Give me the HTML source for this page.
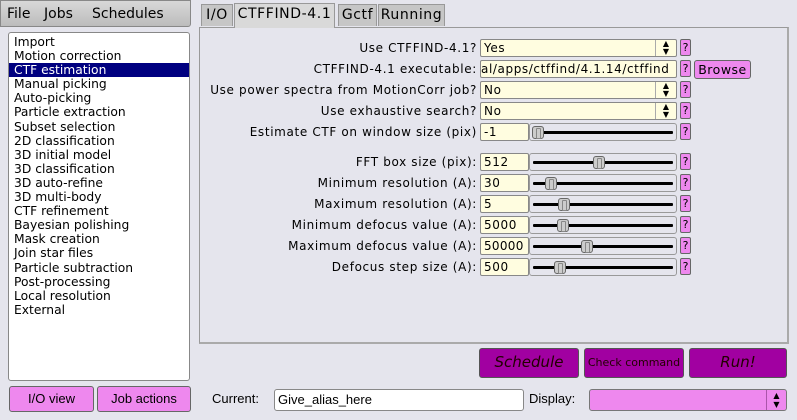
<!DOCTYPE html>
<html><head><meta charset="utf-8"><style>
*{box-sizing:border-box;margin:0;padding:0}
body{width:797px;height:420px;background:#e5e5ed;font-family:"DejaVu Sans","Liberation Sans",sans-serif;font-size:12px;color:#000;position:relative;overflow:hidden}
.a{position:absolute}
.menu{left:0;top:0;width:191px;height:27px;background:linear-gradient(#d8d8d8,#bcbcbc);border:1px solid #888;border-radius:0 0 3px 0;font-size:14px;line-height:26px}
.menu span{position:absolute;top:0}
.list{left:8px;top:32px;width:182px;height:349px;background:#fff;border:1px solid #888;border-radius:3px;padding-top:2px}
.list div{height:14.1px;line-height:14px;padding-left:5px;font-size:12.3px;white-space:nowrap}
.list .sel{background:#000080;color:#fff}
.tab{top:4px;height:22px;background:#c6c6c6;border:1px solid #999;border-bottom:none;font-size:14px;letter-spacing:0.6px;line-height:21px;text-align:center;white-space:nowrap}
.tab.on{background:#d9d9d9;top:3px;height:25px}
.panel{left:199px;top:27px;width:590px;height:317px;border:1px solid #999;border-right:2px solid #aaa;border-bottom:2px solid #aaa;background:#e5e5ed}
.lbl{width:278px;left:199px;text-align:right;height:18px;line-height:18px;letter-spacing:0.65px;white-space:nowrap}
.inp{height:18px;background:#fffde0;border:1px solid #888;border-radius:2px;line-height:16px;padding-left:3px;white-space:nowrap;overflow:hidden;letter-spacing:0.6px}
.dd .ar{position:absolute;right:0;top:0;width:21px;height:16px;border-left:1px solid #aaa;font-size:8px;line-height:8px;text-align:center;letter-spacing:0}
.sl{height:18px;border:1px solid #999;border-radius:3px;background:#e5e5ed}
.sl .ln{position:absolute;left:3px;right:3px;top:7px;height:3px;background:#000;border-radius:1px}
.sl .k{position:absolute;top:2px;width:12px;height:13px;background:#ccc;border:1px solid #666;border-radius:3px}
.sl .k:after{content:"";position:absolute;left:3px;top:1px;width:3px;height:9px;border:1px solid #888;border-radius:1px}
.h{left:680px;width:11px;height:17px;background:#ee88ee;border:1px solid #666;border-radius:2px;font-size:11px;line-height:15px;text-align:center}
.pb{background:#a100a1;border:1px solid #555;border-radius:3px;text-align:center;font-style:italic;font-size:15px;line-height:27px;color:#200}
.vb{background:#ee88ee;border:1px solid #666;border-radius:3px;text-align:center;font-size:13px;line-height:24px;font-family:"Liberation Sans",sans-serif}
</style></head><body>
<div class="a menu"><span style="left:6px">File</span><span style="left:43px">Jobs</span><span style="left:91px">Schedules</span></div>
<div class="a list">
<div>Import</div><div>Motion correction</div><div class="sel">CTF estimation</div><div>Manual picking</div><div>Auto-picking</div><div>Particle extraction</div><div>Subset selection</div><div>2D classification</div><div>3D initial model</div><div>3D classification</div><div>3D auto-refine</div><div>3D multi-body</div><div>CTF refinement</div><div>Bayesian polishing</div><div>Mask creation</div><div>Join star files</div><div>Particle subtraction</div><div>Post-processing</div><div>Local resolution</div><div>External</div>
</div>
<div class="a vb" style="left:9px;top:386px;width:85px;height:26px">I/O view</div>
<div class="a vb" style="left:97px;top:386px;width:94px;height:26px">Job actions</div>

<div class="a panel"></div>
<div class="a tab" style="left:201px;width:32px">I/O</div>
<div class="a tab on" style="left:234px;width:101px">CTFFIND-4.1</div>
<div class="a tab" style="left:338px;width:39px">Gctf</div>
<div class="a tab" style="left:378px;width:67px">Running</div>

<div class="a lbl" style="top:39px">Use CTFFIND-4.1?</div>
<div class="a inp dd" style="left:480px;top:39px;width:197px">Yes<div class="ar">▲<br>▼</div></div>
<div class="a h" style="top:39px">?</div>

<div class="a lbl" style="top:60px">CTFFIND-4.1 executable:</div>
<div class="a inp" style="left:480px;top:60px;width:197px;padding-left:0">al/apps/ctffind/4.1.14/ctffind</div>
<div class="a h" style="top:60px">?</div>
<div class="a vb" style="left:694px;top:60px;width:57px;height:19px;line-height:17px;font-size:12.5px;font-family:'DejaVu Sans',sans-serif;letter-spacing:0.5px">Browse</div>

<div class="a lbl" style="top:81px">Use power spectra from MotionCorr job?</div>
<div class="a inp dd" style="left:480px;top:81px;width:197px">No<div class="ar">▲<br>▼</div></div>
<div class="a h" style="top:81px">?</div>

<div class="a lbl" style="top:102px">Use exhaustive search?</div>
<div class="a inp dd" style="left:480px;top:102px;width:197px">No<div class="ar">▲<br>▼</div></div>
<div class="a h" style="top:102px">?</div>

<div class="a lbl" style="top:123px">Estimate CTF on window size (pix)</div>
<div class="a inp" style="left:480px;top:123px;width:49px">-1</div>
<div class="a sl" style="left:529px;top:123px;width:148px"><div class="ln"></div><div class="k" style="left:2px"></div></div>
<div class="a h" style="top:123px">?</div>

<div class="a lbl" style="top:153px">FFT box size (pix):</div>
<div class="a inp" style="left:480px;top:153px;width:49px">512</div>
<div class="a sl" style="left:529px;top:153px;width:148px"><div class="ln"></div><div class="k" style="left:63px"></div></div>
<div class="a h" style="top:153px">?</div>

<div class="a lbl" style="top:174px">Minimum resolution (A):</div>
<div class="a inp" style="left:480px;top:174px;width:49px">30</div>
<div class="a sl" style="left:529px;top:174px;width:148px"><div class="ln"></div><div class="k" style="left:15px"></div></div>
<div class="a h" style="top:174px">?</div>

<div class="a lbl" style="top:195px">Maximum resolution (A):</div>
<div class="a inp" style="left:480px;top:195px;width:49px">5</div>
<div class="a sl" style="left:529px;top:195px;width:148px"><div class="ln"></div><div class="k" style="left:28px"></div></div>
<div class="a h" style="top:195px">?</div>

<div class="a lbl" style="top:216px">Minimum defocus value (A):</div>
<div class="a inp" style="left:480px;top:216px;width:49px">5000</div>
<div class="a sl" style="left:529px;top:216px;width:148px"><div class="ln"></div><div class="k" style="left:27px"></div></div>
<div class="a h" style="top:216px">?</div>

<div class="a lbl" style="top:237px">Maximum defocus value (A):</div>
<div class="a inp" style="left:480px;top:237px;width:49px;letter-spacing:0.3px">50000</div>
<div class="a sl" style="left:529px;top:237px;width:148px"><div class="ln"></div><div class="k" style="left:51px"></div></div>
<div class="a h" style="top:237px">?</div>

<div class="a lbl" style="top:258px">Defocus step size (A):</div>
<div class="a inp" style="left:480px;top:258px;width:49px">500</div>
<div class="a sl" style="left:529px;top:258px;width:148px"><div class="ln"></div><div class="k" style="left:24px"></div></div>
<div class="a h" style="top:258px">?</div>

<div class="a pb" style="left:479px;top:348px;width:100px;height:30px">Schedule</div>
<div class="a pb" style="left:584px;top:348px;width:100px;height:30px;font-style:normal;font-size:11px">Check command</div>
<div class="a pb" style="left:689px;top:348px;width:98px;height:30px">Run!</div>

<div class="a" style="left:212px;top:391px;font-size:13px;font-family:'Liberation Sans',sans-serif">Current:</div>
<div class="a" style="left:274px;top:389px;width:250px;height:22px;background:#fff;border:1px solid #888;border-radius:3px;padding-left:3px;line-height:20px;font-size:13px;font-family:'Liberation Sans',sans-serif">Give_alias_here</div>
<div class="a" style="left:529px;top:391px;font-size:13px;font-family:'Liberation Sans',sans-serif">Display:</div>
<div class="a" style="left:589px;top:389px;width:198px;height:22px;background:#ee88ee;border:1px solid #777;border-radius:3px"><div style="position:absolute;right:0;top:0;width:20px;height:20px;border-left:1px solid #a5a;font-size:8px;line-height:9px;text-align:center;padding-top:1px">▲<br>▼</div></div>
</body></html>
